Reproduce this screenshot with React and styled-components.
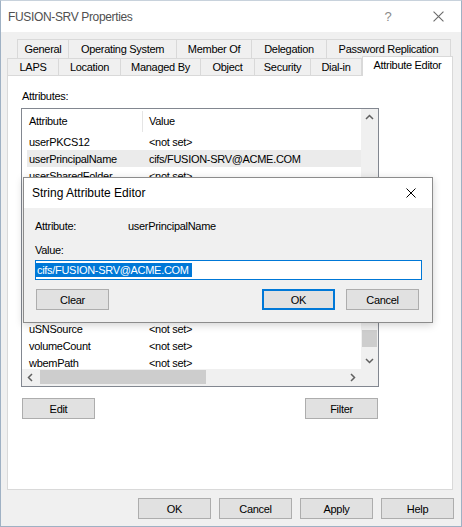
import React from 'react';
import styled, { createGlobalStyle } from 'styled-components';

const GlobalStyle = createGlobalStyle`
  html, body {
    margin: 0;
    padding: 0;
    background: #fff;
  }
  body {
    font-family: "Liberation Sans", Arial, sans-serif;
    font-size: 11px;
    letter-spacing: -0.3px;
    color: #000;
  }
  * {
    box-sizing: border-box;
  }
`;

const rows = [
  ['userPKCS12', '<not set>'],
  ['userPrincipalName', 'cifs/FUSION-SRV@ACME.COM', true],
  ['userSharedFolder', '<not set>'],
  ['userSharedFolderOther', '<not set>'],
  ['userSMIMECertificate', '<not set>'],
  ['userWorkstations', '<not set>'],
  ['uSNChanged', '<not set>'],
  ['uSNCreated', '<not set>'],
  ['uSNDSALastObjRemoved', '<not set>'],
  ['USNIntersite', '<not set>'],
  ['uSNLastObjRem', '<not set>'],
  ['uSNSource', '<not set>'],
  ['volumeCount', '<not set>'],
  ['wbemPath', '<not set>'],
];

const tabsBack = [
  ['General', 52],
  ['Operating System', 108],
  ['Member Of', 75],
  ['Delegation', 75],
  ['Password Replication', 124],
];

const tabsFront = [
  ['LAPS', 52],
  ['Location', 62],
  ['Managed By', 80],
  ['Object', 54],
  ['Security', 56],
  ['Dial-in', 51],
];

const Window = styled.div`
  position: relative;
  width: 462px;
  height: 527px;
  border: 1px solid #9fb1c4;
  border-top-color: #c8d2dc;
  background: #f0f0f0;
  display: flex;
  flex-direction: column;
  overflow: hidden;
`;

const TitleBar = styled.div`
  height: 31px;
  flex-shrink: 0;
  background: #fff;
  display: flex;
  align-items: center;
  padding-left: 7px;
`;

const TitleText = styled.span`
  flex: 1;
  font-size: 12px;
  letter-spacing: ${p => (p.$tight ? '-0.35px' : '0')};
  color: ${p => (p.$dim ? '#505050' : '#000')};
`;

const HelpGlyph = styled.span`
  width: 46px;
  text-align: center;
  font-size: 13px;
  color: #8a8a8a;
  margin-right: 4px;
`;

const CloseBox = styled.div`
  width: 46px;
  height: 31px;
  display: flex;
  align-items: center;
  justify-content: center;
`;

const Body = styled.div`
  padding: 7px 8px 0 6px;
  display: flex;
  flex-direction: column;
`;

const TabRow = styled.div`
  display: flex;
  height: ${p => p.$h}px;
  padding-left: ${p => p.$indent}px;
  position: relative;
  z-index: ${p => (p.$front ? 2 : 1)};
`;

const Tab = styled.div`
  width: ${p => p.$w}px;
  height: 100%;
  display: flex;
  align-items: center;
  justify-content: center;
  border-top: 1px solid #d9d9d9;
  border-right: 1px solid #d9d9d9;
  background: #f0f0f0;
  white-space: nowrap;
  &:first-child {
    border-left: 1px solid #d9d9d9;
  }
`;

const ActiveTab = styled.div`
  width: ${p => p.$w}px;
  height: 20px;
  margin-top: -2px;
  display: flex;
  justify-content: center;
  padding-top: 2px;
  border: 1px solid #d9d9d9;
  border-bottom: none;
  background: #fff;
  white-space: nowrap;
`;

const Panel = styled.div`
  height: 415px;
  background: #fff;
  border: 1px solid #d9d9d9;
  padding: 14px 0 0 13px;
  position: relative;
  z-index: 1;
`;

const FieldLabel = styled.div`
  line-height: 13px;
  padding-left: 1px;
  margin-bottom: 5px;
`;

const ListBox = styled.div`
  width: 358px;
  height: 279px;
  border: 1px solid #828790;
  display: grid;
  grid-template-columns: 1fr 17px;
  grid-template-rows: 1fr 17px;
  background: #fff;
`;

const ListContent = styled.div`
  overflow: hidden;
`;

const HeaderRow = styled.div`
  display: flex;
  height: 24px;
  align-items: center;
`;

const HeaderCell = styled.div`
  width: ${p => (p.$w ? `${p.$w}px` : 'auto')};
  padding-left: ${p => p.$pad}px;
  line-height: 21px;
  border-right: ${p => (p.$divider ? '1px solid #e5e5e5' : 'none')};
`;

const Row = styled.div`
  display: flex;
  height: 17px;
  align-items: center;
  margin-left: 5px;
  background: ${p => (p.$selected ? '#ebebeb' : 'transparent')};
  white-space: nowrap;
`;

const Cell = styled.div`
  width: ${p => (p.$w ? `${p.$w}px` : 'auto')};
  padding-left: ${p => p.$pad}px;
  flex-shrink: 0;
`;

const ScrollBar = styled.div`
  background: #f0f0f0;
  display: flex;
  flex-direction: ${p => (p.$vertical ? 'column' : 'row')};
`;

const Corner = styled.div`
  background: #f0f0f0;
`;

const ArrowBox = styled.div`
  width: 17px;
  height: 17px;
  flex-shrink: 0;
  display: flex;
  align-items: center;
  justify-content: center;
`;

const Track = styled.div`
  flex: 1;
  position: relative;
`;

const Thumb = styled.div`
  position: absolute;
  background: #cdcdcd;
  ${p =>
    p.$vertical
      ? `left: 1px; width: 15px; top: ${p.$offset}px; height: ${p.$size}px;`
      : `top: 1px; height: 14px; left: ${p.$offset}px; width: ${p.$size}px;`}
`;

const ArrowSvg = styled.svg`
  transform: rotate(${p => p.$rot}deg);
`;

const Chevron = ({ dir }) => {
  const rot = { up: 0, right: 90, down: 180, left: 270 }[dir];
  return (
    <ArrowSvg width="9" height="9" viewBox="0 0 9 9" $rot={rot}>
      <polyline points="1,6 4.5,2.5 8,6" fill="none" stroke="#606060" strokeWidth="1.5" />
    </ArrowSvg>
  );
};

const ButtonRow = styled.div`
  display: flex;
  justify-content: space-between;
  width: ${p => (p.$w ? `${p.$w}px` : 'auto')};
  padding: ${p => p.$pad || '0'};
  margin-top: ${p => p.$mt}px;
`;

const ButtonGroup = styled.div`
  display: flex;
  gap: ${p => p.$gap}px;
`;

const Button = styled.button`
  width: 73px;
  height: 21px;
  padding: 0;
  font-family: "Liberation Sans", Arial, sans-serif;
  font-size: 11px;
  letter-spacing: -0.3px;
  color: #000;
  background: #e1e1e1;
  border: 1px solid ${p => (p.$default ? '#0078d7' : '#adadad')};
  box-shadow: ${p => (p.$default ? 'inset 0 0 0 1px #0078d7' : 'none')};
  border-radius: 0;
`;

const Footer = styled.div`
  display: flex;
  justify-content: flex-end;
  gap: 8px;
  margin-top: 8px;
  margin-right: -1px;
`;

const Dialog = styled.div`
  position: absolute;
  left: 22px;
  top: 176px;
  width: 410px;
  height: 146px;
  border: 1px solid #8c8c8c;
  background: #f0f0f0;
  box-shadow: 0 2px 8px rgba(0, 0, 0, 0.18);
  z-index: 5;
  display: flex;
  flex-direction: column;
`;

const DialogTitle = styled(TitleBar)`
  height: 30px;
  padding-left: 8px;
`;

const DialogClose = styled(CloseBox)`
  width: 40px;
  height: 30px;
  margin-right: 1px;
`;

const DialogBody = styled.div`
  padding: 12px 10px 0 11px;
`;

const InfoRow = styled.div`
  display: grid;
  grid-template-columns: 93px 1fr;
  line-height: 13px;
`;

const ValueLabel = styled.div`
  line-height: 13px;
  margin-top: 11px;
`;

const TextBox = styled.div`
  width: 387px;
  height: 20px;
  margin-top: 3px;
  border: 1px solid #0078d7;
  background: #fff;
  display: flex;
  align-items: center;
`;

const Selection = styled.span`
  background: #0078d7;
  color: #fff;
  line-height: 14px;
  padding: 0 3px 0 1px;
`;

const CloseIcon = ({ color, size }) => (
  <svg width={size} height={size} viewBox="0 0 10 10">
    <path d="M0.5 0.5 L9.5 9.5 M9.5 0.5 L0.5 9.5" stroke={color} strokeWidth="1" fill="none" />
  </svg>
);

export default function App() {
  return (
    <>
      <GlobalStyle />
      <Window>
        <TitleBar>
          <TitleText $tight $dim>FUSION-SRV Properties</TitleText>
          <HelpGlyph>?</HelpGlyph>
          <CloseBox>
            <CloseIcon color="#6a6a6a" size={11} />
          </CloseBox>
        </TitleBar>

        <Body>
          <TabRow $h={19} $indent={10}>
            {tabsBack.map(([label, w]) => (
              <Tab key={label} $w={w}>{label}</Tab>
            ))}
          </TabRow>
          <TabRow $h={17} $indent={0} $front>
            {tabsFront.map(([label, w]) => (
              <Tab key={label} $w={w}>{label}</Tab>
            ))}
            <ActiveTab $w={91}>Attribute Editor</ActiveTab>
          </TabRow>

          <Panel>
            <FieldLabel>Attributes:</FieldLabel>
            <ListBox>
              <ListContent>
                <HeaderRow>
                  <HeaderCell $w={121} $pad={7} $divider>Attribute</HeaderCell>
                  <HeaderCell $pad={6}>Value</HeaderCell>
                </HeaderRow>
                {rows.map(([name, value, selected]) => (
                  <Row key={name} $selected={selected}>
                    <Cell $w={115} $pad={2}>{name}</Cell>
                    <Cell $pad={7}>{value}</Cell>
                  </Row>
                ))}
              </ListContent>
              <ScrollBar $vertical>
                <ArrowBox><Chevron dir="up" /></ArrowBox>
                <Track>
                  <Thumb $vertical $offset={204} $size={17} />
                </Track>
                <ArrowBox><Chevron dir="down" /></ArrowBox>
              </ScrollBar>
              <ScrollBar>
                <ArrowBox><Chevron dir="left" /></ArrowBox>
                <Track>
                  <Thumb $offset={1} $size={166} />
                </Track>
                <ArrowBox><Chevron dir="right" /></ArrowBox>
              </ScrollBar>
              <Corner />
            </ListBox>
            <ButtonRow $w={358} $pad="0 1px" $mt={11}>
              <Button>Edit</Button>
              <Button>Filter</Button>
            </ButtonRow>
          </Panel>

          <Footer>
            <Button>OK</Button>
            <Button>Cancel</Button>
            <Button>Apply</Button>
            <Button>Help</Button>
          </Footer>
        </Body>

        <Dialog>
          <DialogTitle>
            <TitleText>String Attribute Editor</TitleText>
            <DialogClose>
              <CloseIcon color="#000" size={10} />
            </DialogClose>
          </DialogTitle>
          <DialogBody>
            <InfoRow>
              <span>Attribute:</span>
              <span>userPrincipalName</span>
            </InfoRow>
            <ValueLabel>Value:</ValueLabel>
            <TextBox>
              <Selection>cifs/FUSION-SRV@ACME.COM</Selection>
            </TextBox>
            <ButtonRow $pad="0 3px 0 1px" $mt={9}>
              <Button>Clear</Button>
              <ButtonGroup $gap={11}>
                <Button $default>OK</Button>
                <Button>Cancel</Button>
              </ButtonGroup>
            </ButtonRow>
          </DialogBody>
        </Dialog>
      </Window>
    </>
  );
}
